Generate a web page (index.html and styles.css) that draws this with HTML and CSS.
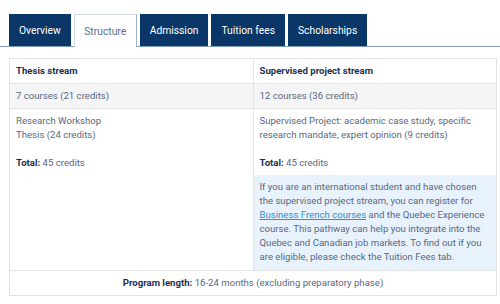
FILE: index.html
```html
<!DOCTYPE html>
<html lang="en">
<head>
<meta charset="utf-8">
<title>Program structure</title>
<link rel="stylesheet" href="styles.css">
</head>
<body>
<div class="page">
  <nav class="tabs">
    <a class="tab">Overview</a>
    <a class="tab active">Structure</a>
    <a class="tab">Admission</a>
    <a class="tab">Tuition fees</a>
    <a class="tab">Scholarships</a>
  </nav>
  <table class="grid">
    <tr class="head">
      <th>Thesis stream</th>
      <th>Supervised project stream</th>
    </tr>
    <tr class="shade">
      <td>7 courses (21 credits)</td>
      <td>12 courses (36 credits)</td>
    </tr>
    <tr class="main">
      <td class="cell">
        <div class="block">Research Workshop<br>Thesis (24 credits)<br><br><b>Total:</b> 45 credits</div>
      </td>
      <td class="cell">
        <div class="block">Supervised Project: academic case study, specific research mandate, expert opinion (9 credits)<br><br><b>Total:</b> 45 credits</div>
        <div class="note">If you are an international student and have chosen the supervised project stream, you can register for <a class="link">Business French courses</a> and the Quebec Experience course. This pathway can help you integrate into the Quebec and Canadian job markets. To find out if you are eligible, please check the Tuition Fees tab.</div>
      </td>
    </tr>
    <tr class="foot">
      <td colspan="2"><b>Program length:</b> 16-24 months (excluding preparatory phase)</td>
    </tr>
  </table>
</div>
</body>
</html>
```
FILE: styles.css
```css
html, body {
  margin: 0;
  padding: 0;
  background: #ffffff;
}
body {
  font-family: Roboto, "Liberation Sans", sans-serif;
  font-size: 9.6px;
  color: #5b6880;
}
.page {
  padding: 14px 3px 0 9px;
}
.tabs {
  display: flex;
  gap: 3px;
  height: 32px;
  margin-left: -9px;
  margin-right: -3px;
  padding-left: 9px;
  border-bottom: 1px solid #7f9cbc;
}
.tab {
  display: flex;
  align-items: center;
  padding: 0 10px;
  background: #0a3768;
  color: #ffffff;
  font-size: 10.3px;
  height: 32px;
}
.tab.active {
  background: #ffffff;
  color: #5b6f8c;
  border: 1px solid #d3dae3;
  border-right-color: #9fb1c6;
  border-bottom: none;
  box-sizing: border-box;
  padding: 0 9.5px;
  margin-bottom: -1px;
  height: 33px;
}
.grid {
  margin-top: 11px;
  width: 488px;
  border-collapse: collapse;
  table-layout: fixed;
  border: 1px solid #e2e2e2;
}
.grid th, .grid td {
  border: 1px solid #e2e2e2;
  text-align: left;
  vertical-align: top;
  line-height: 14px;
  padding: 5px 6px 5px 6px;
}
.grid th {
  color: #1d2f50;
  font-weight: 700;
  height: 14px;
}
.shade td {
  background: #f5f5f5;
}
.grid td.cell {
  padding: 0;
}
.block {
  padding: 5px 6px 5px 6px;
}
.note {
  background: #e7f2fd;
  padding: 5px 6px 6px 6px;
}
.link {
  color: #2e8fd1;
  text-decoration: underline;
  text-underline-offset: 1px;
}
b {
  color: #1d2f50;
}
.foot td {
  text-align: center;
}
```
